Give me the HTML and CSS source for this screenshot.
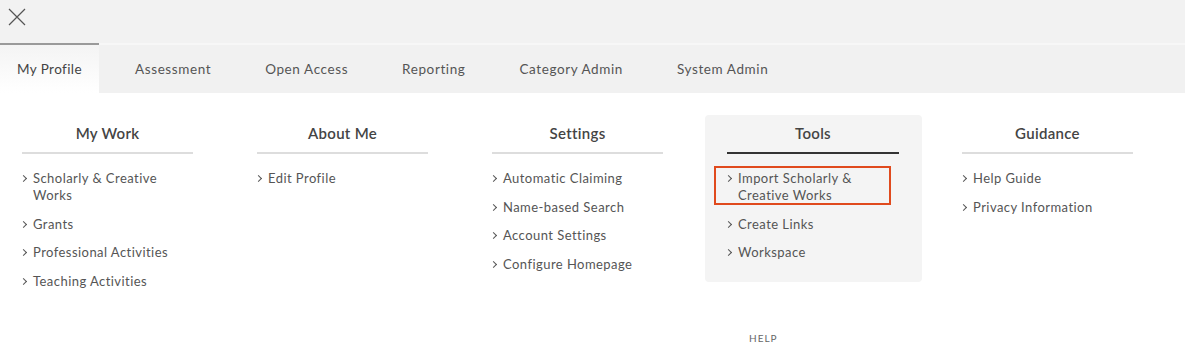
FILE: index.html
```html
<!DOCTYPE html>
<html lang="en">
<head>
    <meta charset="UTF-8">
    <meta name="viewport" content="width=device-width, initial-scale=1.0">
    <title>Menu</title>
    <link rel="stylesheet" href="styles.css">
</head>
<body>

    <header class="top-bar">
        <button class="close-btn" aria-label="Close">
            <svg width="18" height="18" viewBox="0 0 18 18">
                <path d="M1 1 L17 17 M17 1 L1 17" stroke="#555" stroke-width="1.2" fill="none"/>
            </svg>
        </button>
    </header>

    <nav class="tabs">
        <a class="tab active">My Profile</a>
        <a class="tab">Assessment</a>
        <a class="tab">Open Access</a>
        <a class="tab">Reporting</a>
        <a class="tab">Category Admin</a>
        <a class="tab">System Admin</a>
    </nav>

    <main class="menu">
        <section class="menu-col">
            <h3>My Work</h3>
            <ul>
                <li><a>Scholarly &amp; Creative Works</a></li>
                <li><a>Grants</a></li>
                <li><a>Professional Activities</a></li>
                <li><a>Teaching Activities</a></li>
            </ul>
        </section>
        <section class="menu-col">
            <h3>About Me</h3>
            <ul>
                <li><a>Edit Profile</a></li>
            </ul>
        </section>
        <section class="menu-col">
            <h3>Settings</h3>
            <ul>
                <li><a>Automatic Claiming</a></li>
                <li><a>Name-based Search</a></li>
                <li><a>Account Settings</a></li>
                <li><a>Configure Homepage</a></li>
            </ul>
        </section>
        <section class="menu-col current">
            <h3>Tools</h3>
            <ul>
                <li class="highlight"><a>Import Scholarly &amp; Creative Works</a></li>
                <li><a>Create Links</a></li>
                <li><a>Workspace</a></li>
            </ul>
        </section>
        <section class="menu-col">
            <h3>Guidance</h3>
            <ul>
                <li><a>Help Guide</a></li>
                <li><a>Privacy Information</a></li>
            </ul>
        </section>
    </main>

    <footer class="footer">
        <a class="help">HELP</a>
    </footer>

</body>
</html>
```

FILE: styles.css
```css
* {
    margin: 0;
    padding: 0;
    box-sizing: border-box;
    font-family: 'Lato', 'Open Sans', sans-serif;
}

body {
    background: #fff;
    width: 1185px;
    height: 348px;
    overflow: hidden;
}

.top-bar {
    height: 43px;
    background: #f2f2f2;
    padding: 8px 0 0 8px;
}

.close-btn {
    background: none;
    border: none;
    width: 18px;
    height: 18px;
    cursor: pointer;
}

.tabs {
    display: flex;
    height: 50px;
    background: #f1f1f1;
    border-top: 2px solid #f7f7f7;
}

.tab {
    display: flex;
    align-items: center;
    padding: 0 27px;
    font-size: 13.5px;
    letter-spacing: 0.6px;
    color: #555;
    cursor: pointer;
}

.tab.active {
    width: 99px;
    padding: 0;
    justify-content: center;
    margin-top: -2px;
    margin-right: 9px;
    border-top: 2px solid #9a9a9a;
    background: linear-gradient(#f4f4f4, #fff);
    color: #444;
    letter-spacing: 0.4px;
}

.menu {
    display: flex;
    gap: 64px;
    padding: 22px 0 0 22px;
    height: 233px;
}

.menu-col {
    width: 171px;
}

.menu-col h3 {
    text-align: center;
    font-size: 15px;
    font-weight: 600;
    letter-spacing: 0.3px;
    color: #444;
    padding: 9px 0 10px;
    border-bottom: 2px solid #ddd;
    margin-bottom: 16px;
}

.menu-col.current {
    background: #f4f4f4;
    border-radius: 4px;
    margin: 0 -24px 0 -22px;
    padding: 0 23px 0 22px;
    height: 167px;
    width: 217px;
}

.menu-col.current h3 {
    border-bottom-color: #333;
}

.menu-col ul {
    list-style: none;
}

.menu-col li {
    position: relative;
    padding-left: 11px;
    margin-bottom: 11.7px;
    font-size: 13px;
    line-height: 17px;
    letter-spacing: 0.45px;
    color: #555;
}

.menu-col li::before {
    content: "";
    position: absolute;
    left: -1px;
    top: 6px;
    width: 4px;
    height: 4px;
    border-top: 1.2px solid #555;
    border-right: 1.2px solid #555;
    transform: rotate(45deg);
}

.menu-col li a {
    display: block;
    cursor: pointer;
}

.menu-col li.highlight::after {
    content: "";
    position: absolute;
    left: -13px;
    right: 8px;
    top: -4px;
    bottom: -1px;
    border: 2px solid #e04a1d;
}

.footer {
    padding-left: 749px;
}

.help {
    font-size: 10px;
    letter-spacing: 1px;
    color: #666;
}
```
